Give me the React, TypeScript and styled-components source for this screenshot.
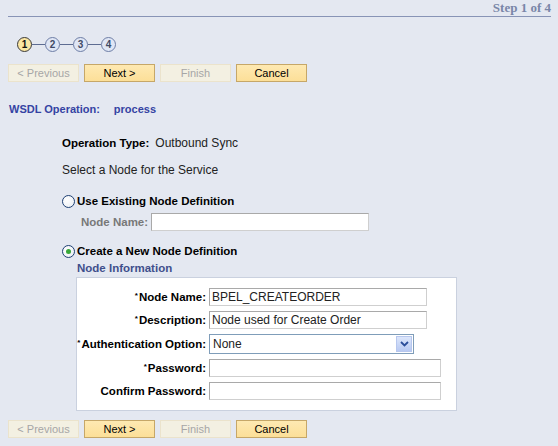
import { Fragment } from "react";
import styled, { createGlobalStyle } from "styled-components";

const GlobalStyle = createGlobalStyle`
  html, body {
    margin: 0;
    padding: 0;
    background-color: #e4e8f1;
  }
  body {
    font-family: "Liberation Sans", Arial, sans-serif;
    font-size: 11px;
    color: #000;
  }
`;

const Page = styled.div`
  width: 558px;
  height: 446px;
  box-sizing: border-box;
  padding: 0 7px 0 8px;
  background-color: #e4e8f1;
  overflow: hidden;
`;

const Header = styled.div`
  height: 16px;
  border-bottom: 1px solid #8894b6;
  text-align: right;
  font-family: "Liberation Serif", "Times New Roman", serif;
  font-weight: bold;
  font-size: 13px;
  line-height: 16px;
  color: #7986a8;
`;

const Steps = styled.div`
  display: flex;
  align-items: center;
  margin-top: 20px;
  padding-left: 9px;
  height: 15px;
`;

const StepDot = styled.div<{ $current?: boolean }>`
  width: 15px;
  height: 15px;
  box-sizing: border-box;
  border-radius: 50%;
  border: 1px solid ${(p) => (p.$current ? "#3a3a3a" : "#6e7ea6")};
  background-color: ${(p) => (p.$current ? "#fbe6a2" : "#dfe6f5")};
  color: ${(p) => (p.$current ? "#111" : "#3f4a66")};
  font-size: 10px;
  font-weight: bold;
  display: flex;
  align-items: center;
  justify-content: center;
  line-height: 1;
`;

const StepLine = styled.div`
  width: 13px;
  height: 1px;
  background-color: #5d6c92;
`;

const ButtonBar = styled.div<{ $top: number }>`
  display: flex;
  gap: 5px;
  margin-top: ${(p) => p.$top}px;
`;

const WizButton = styled.div<{ $disabled?: boolean }>`
  width: 71px;
  height: 18px;
  box-sizing: border-box;
  display: flex;
  align-items: center;
  justify-content: center;
  font-size: 11px;
  border: 1px solid ${(p) => (p.$disabled ? "#ebe3cc" : "#c6a768")};
  background: ${(p) =>
    p.$disabled ? "#f3f0e2" : "linear-gradient(#fee9b2, #fcdf98)"};
  color: ${(p) => (p.$disabled ? "#a6a6a6" : "#000")};
`;

const OperationLine = styled.div`
  margin-top: 20px;
  padding-left: 1px;
  font-weight: bold;
  font-size: 11px;
  line-height: 14px;
  color: #3443a3;
  display: flex;
  gap: 14px;
`;

const Section = styled.div`
  padding-left: 54px;
`;

const TextLine = styled.div<{ $top: number }>`
  margin-top: ${(p) => p.$top}px;
  line-height: 14px;
  font-size: 12px;
  color: #222;
  display: flex;
  gap: 6px;
`;

const BoldLabel = styled.span`
  font-weight: bold;
  font-size: 11.5px;
  color: #000;
`;

const RadioRow = styled.label<{ $top: number }>`
  display: flex;
  align-items: center;
  gap: 2px;
  margin-top: ${(p) => p.$top}px;
  height: 14px;
  font-weight: bold;
  font-size: 11.5px;
`;

const Radio = styled.span<{ $checked?: boolean }>`
  width: 13px;
  height: 13px;
  box-sizing: border-box;
  border-radius: 50%;
  border: 1px solid #1d3f73;
  background: radial-gradient(circle at 35% 35%, #ffffff, #e8ecf2);
  display: flex;
  align-items: center;
  justify-content: center;
  &::after {
    content: "";
    width: 5px;
    height: 5px;
    border-radius: 50%;
    background-color: #38a83a;
    display: ${(p) => (p.$checked ? "block" : "none")};
  }
`;

const ExistingRow = styled.div`
  display: flex;
  align-items: center;
  gap: 3px;
  margin-top: 5px;
  padding-left: 19px;
`;

const MutedLabel = styled.span`
  font-weight: bold;
  font-size: 11.5px;
  color: #787878;
`;

const TextBox = styled.div<{ $w: number }>`
  width: ${(p) => p.$w}px;
  height: 18px;
  box-sizing: border-box;
  background-color: #fff;
  border: 1px solid #a9a9a9;
  border-right-color: #cfcfcf;
  border-bottom-color: #cfcfcf;
  padding: 0 2px;
  font-size: 12px;
  line-height: 16px;
  color: #222;
  white-space: nowrap;
  overflow: hidden;
`;

const SubHeading = styled.div`
  margin-top: 3px;
  padding-left: 15px;
  font-weight: bold;
  font-size: 11.5px;
  line-height: 14px;
  color: #3f4f8c;
`;

const Panel = styled.div`
  margin: 2px 0 0 14px;
  width: 381px;
  height: 134px;
  box-sizing: border-box;
  background-color: #fff;
  border: 1px solid #cad1df;
  padding-top: 10px;
  display: grid;
  grid-template-columns: 129px auto;
  column-gap: 3px;
  row-gap: 5px;
  align-content: start;
  align-items: center;
`;

const FieldLabel = styled.div`
  text-align: right;
  font-weight: bold;
  font-size: 11.5px;
  white-space: nowrap;
  color: #000;
`;

const Req = styled.span`
  font-size: 8px;
  vertical-align: 3px;
  margin-right: 1px;
`;

const Select = styled.div`
  width: 205px;
  height: 20px;
  box-sizing: border-box;
  background-color: #fff;
  border: 1px solid #7f9db9;
  display: flex;
  align-items: center;
  justify-content: space-between;
  padding: 0 1px 0 3px;
  font-size: 12px;
  color: #222;
`;

const SelectArrow = styled.div`
  width: 16px;
  height: 16px;
  box-sizing: border-box;
  border: 1px solid #b7c7ee;
  background: linear-gradient(#dce6fb, #b8c9f2);
  display: flex;
  align-items: center;
  justify-content: center;
`;

const fields: { label: string; required: boolean; value: string; width: number }[] = [
  { label: "Node Name:", required: true, value: "BPEL_CREATEORDER", width: 218 },
  { label: "Description:", required: true, value: "Node used for Create Order", width: 218 },
];

const passwords: { label: string; required: boolean }[] = [
  { label: "Password:", required: true },
  { label: "Confirm Password:", required: false },
];

function WizardButtons({ top }: { top: number }) {
  return (
    <ButtonBar $top={top}>
      <WizButton $disabled>&lt; Previous</WizButton>
      <WizButton>Next &gt;</WizButton>
      <WizButton $disabled>Finish</WizButton>
      <WizButton>Cancel</WizButton>
    </ButtonBar>
  );
}

export default function App() {
  return (
    <>
      <GlobalStyle />
      <Page>
        <Header>Step 1 of 4</Header>
        <Steps>
          {[1, 2, 3, 4].map((n) => (
            <Fragment key={n}>
              {n > 1 && <StepLine />}
              <StepDot $current={n === 1}>{n}</StepDot>
            </Fragment>
          ))}
        </Steps>
        <WizardButtons top={12} />
        <OperationLine>
          <span>WSDL Operation:</span>
          <span>process</span>
        </OperationLine>
        <Section>
          <TextLine $top={20}>
            <BoldLabel>Operation Type:</BoldLabel>
            <span>Outbound Sync</span>
          </TextLine>
          <TextLine $top={13}>Select a Node for the Service</TextLine>
          <RadioRow $top={17}>
            <Radio />
            Use Existing Node Definition
          </RadioRow>
          <ExistingRow>
            <MutedLabel>Node Name:</MutedLabel>
            <TextBox $w={218} />
          </ExistingRow>
          <RadioRow $top={13}>
            <Radio $checked />
            Create a New Node Definition
          </RadioRow>
          <SubHeading>Node Information</SubHeading>
          <Panel>
            {fields.map((f) => (
              <Fragment key={f.label}>
                <FieldLabel>
                  {f.required && <Req>*</Req>}
                  {f.label}
                </FieldLabel>
                <TextBox $w={f.width}>{f.value}</TextBox>
              </Fragment>
            ))}
            <FieldLabel>
              <Req>*</Req>Authentication Option:
            </FieldLabel>
            <Select>
              <span>None</span>
              <SelectArrow>
                <svg width="9" height="6" viewBox="0 0 9 6">
                  <path d="M1 1 L4.5 4.5 L8 1" fill="none" stroke="#2b4d9a" strokeWidth="1.8" />
                </svg>
              </SelectArrow>
            </Select>
            {passwords.map((f) => (
              <Fragment key={f.label}>
                <FieldLabel>
                  {f.required && <Req>*</Req>}
                  {f.label}
                </FieldLabel>
                <TextBox $w={232} />
              </Fragment>
            ))}
          </Panel>
        </Section>
        <WizardButtons top={9} />
      </Page>
    </>
  );
}
